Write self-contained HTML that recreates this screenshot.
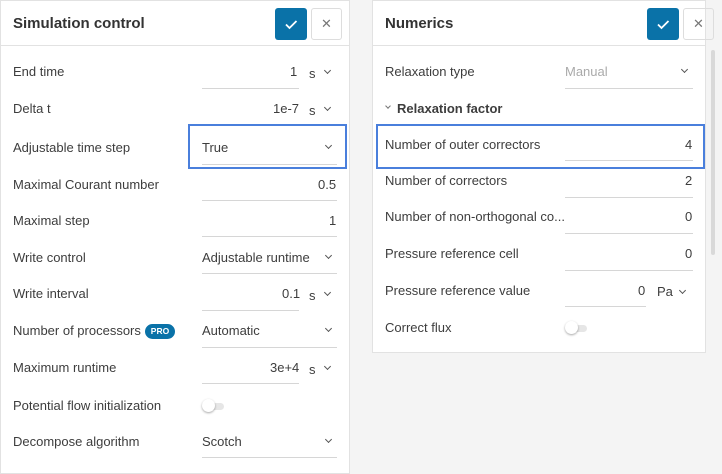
<!DOCTYPE html><html><head><style>
*{box-sizing:border-box;margin:0;padding:0}
body{width:722px;height:474px;background:#f4f4f4;font-family:"Liberation Sans",sans-serif;font-size:13px;color:#3d3d3d;position:relative;overflow:hidden}
.p{position:absolute;background:#fff;border:1px solid #e2e2e2}
.h{position:absolute;left:0;right:0;top:0;height:45px;border-bottom:1px solid #e2e2e2}
.h .t{position:absolute;left:12px;top:14px;font-size:15px;font-weight:bold;color:#333}
.ok{position:absolute;width:32px;height:32px;top:7px;background:#0a72a8;border-radius:3px}
.x{position:absolute;width:31px;height:32px;top:7px;border:1px solid #ddd;border-radius:3px;color:#777;text-align:center;line-height:30px;font-size:13px}
.a{position:absolute;white-space:nowrap;margin-top:1px}
.u{position:absolute;height:1px;background:#d6d6d6}
.c{position:absolute;width:5px;height:5px;border-right:1.2px solid #555;border-bottom:1.2px solid #555;transform:rotate(45deg);margin-top:1px}
.sel{position:absolute;border:2px solid #4a7fdc}
.tg{position:absolute;width:24px;height:12px}
.tg i{position:absolute;left:6px;top:3px;width:16px;height:7px;background:#e6e6e6;border-radius:4px}
.tg b{position:absolute;left:0;top:-1px;width:13px;height:13px;background:#fff;border-radius:50%;box-shadow:0 1px 2px rgba(0,0,0,.35)}
</style></head><body>
<div class="p" style="left:0;top:0;width:350px;height:474px">
<div class="h"><div class="t">Simulation control</div>
<div class="ok" style="left:274px"><svg width="32" height="32"><path d="M11 16.5l3.5 3.5 7-7" stroke="#fff" stroke-width="1.8" fill="none"/></svg></div>
<div class="x" style="left:310px">✕</div></div>
</div>
<div class="p" style="left:372px;top:0;width:334px;height:353px">
<div class="h"><div class="t">Numerics</div>
<div class="ok" style="left:274px"><svg width="32" height="32"><path d="M11 16.5l3.5 3.5 7-7" stroke="#fff" stroke-width="1.8" fill="none"/></svg></div>
<div class="x" style="left:310px">✕</div></div>
</div>
<div style="position:absolute;left:711px;top:50px;width:4px;height:205px;background:#d9d9d9;border-radius:2px"></div>

<div class="a" style="left:13px;top:63px">End time</div><div class="a" style="left:290px;top:63px">1</div><div class="a" style="left:309px;top:65px">s</div><div class="c" style="left:325px;top:67px"></div><div class="u" style="left:202px;top:88px;width:97px"></div>
<div class="a" style="left:13px;top:100px">Delta t</div><div class="a" style="left:273px;top:100px">1e-7</div><div class="a" style="left:309px;top:102px">s</div><div class="c" style="left:325px;top:104px"></div><div class="u" style="left:202px;top:125px;width:97px"></div>
<div class="a" style="left:13px;top:139px">Adjustable time step</div><div class="a" style="left:202px;top:139px">True</div><div class="c" style="left:326px;top:142px"></div><div class="u" style="left:202px;top:164px;width:135px"></div>
<div class="sel" style="left:188px;top:124px;width:159px;height:45px"></div>
<div class="a" style="left:13px;top:176px">Maximal Courant number</div><div class="a" style="left:318px;top:176px">0.5</div><div class="u" style="left:202px;top:200px;width:135px"></div>
<div class="a" style="left:13px;top:212px">Maximal step</div><div class="a" style="left:329px;top:212px">1</div><div class="u" style="left:202px;top:236px;width:135px"></div>
<div class="a" style="left:13px;top:249px">Write control</div><div class="a" style="left:202px;top:249px">Adjustable runtime</div><div class="c" style="left:326px;top:252px"></div><div class="u" style="left:202px;top:273px;width:135px"></div>
<div class="a" style="left:13px;top:285px">Write interval</div><div class="a" style="left:282px;top:285px">0.1</div><div class="a" style="left:309px;top:287px">s</div><div class="c" style="left:325px;top:289px"></div><div class="u" style="left:202px;top:310px;width:97px"></div>
<div class="a" style="left:13px;top:322px">Number of processors</div><div class="a" style="left:145px;top:323px;width:30px;height:15px;background:#0a72a8;color:#fff;border-radius:8px;font-size:8.5px;font-weight:bold;text-align:center;line-height:15px">PRO</div><div class="a" style="left:202px;top:322px">Automatic</div><div class="c" style="left:326px;top:325px"></div><div class="u" style="left:202px;top:347px;width:135px"></div>
<div class="a" style="left:13px;top:359px">Maximum runtime</div><div class="a" style="left:270px;top:359px">3e+4</div><div class="a" style="left:309px;top:361px">s</div><div class="c" style="left:325px;top:363px"></div><div class="u" style="left:202px;top:383px;width:97px"></div>
<div class="a" style="left:13px;top:397px">Potential flow initialization</div><div class="tg" style="left:202px;top:400px"><i></i><b></b></div>
<div class="a" style="left:13px;top:433px">Decompose algorithm</div><div class="a" style="left:202px;top:433px">Scotch</div><div class="c" style="left:326px;top:436px"></div><div class="u" style="left:202px;top:457px;width:135px"></div>

<div class="a" style="left:385px;top:63px">Relaxation type</div><div class="a" style="left:565px;top:63px;color:#aaa">Manual</div><div class="c" style="left:682px;top:66px"></div><div class="u" style="left:565px;top:88px;width:128px"></div>
<div class="c" style="left:386px;top:103px;width:4px;height:4px;border-color:#777"></div><div class="a" style="left:397px;top:100px;font-weight:bold">Relaxation factor</div>
<div class="a" style="left:385px;top:136px">Number of outer correctors</div><div class="a" style="left:685px;top:136px">4</div><div class="u" style="left:565px;top:160px;width:128px"></div>
<div class="sel" style="left:376px;top:124px;width:329px;height:45px"></div>
<div class="a" style="left:385px;top:172px">Number of correctors</div><div class="a" style="left:685px;top:172px">2</div><div class="u" style="left:565px;top:197px;width:128px"></div>
<div class="a" style="left:385px;top:208px">Number of non-orthogonal co...</div><div class="a" style="left:685px;top:208px">0</div><div class="u" style="left:565px;top:233px;width:128px"></div>
<div class="a" style="left:385px;top:245px">Pressure reference cell</div><div class="a" style="left:685px;top:245px">0</div><div class="u" style="left:565px;top:270px;width:128px"></div>
<div class="a" style="left:385px;top:282px">Pressure reference value</div><div class="a" style="left:638px;top:282px">0</div><div class="a" style="left:657px;top:283px">Pa</div><div class="c" style="left:680px;top:287px"></div><div class="u" style="left:565px;top:306px;width:81px"></div>
<div class="a" style="left:385px;top:319px">Correct flux</div><div class="tg" style="left:565px;top:322px"><i></i><b></b></div>
</body></html>
